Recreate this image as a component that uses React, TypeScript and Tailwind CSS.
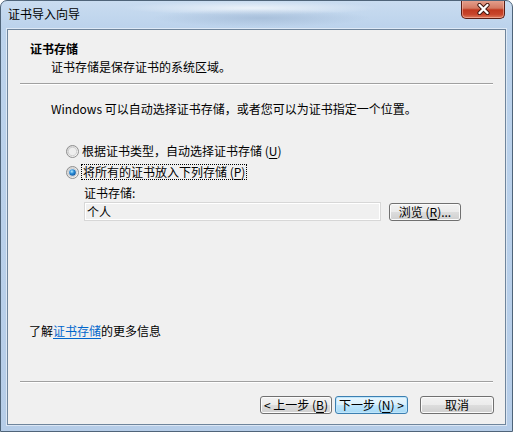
import React from "react";

const font = { fontFamily: '"Noto Sans CJK SC", "Noto Sans", sans-serif' };

function Radio({ checked }: { checked?: boolean }) {
  return (
    <svg width="13" height="13" viewBox="0 0 13 13" className="shrink-0">
      <defs>
        <linearGradient id={checked ? "rgc" : "rgu"} x1="0" y1="0" x2="1" y2="1">
          <stop offset="0" stopColor="#cfcfcf" />
          <stop offset="1" stopColor="#ffffff" />
        </linearGradient>
        <radialGradient id="dot" cx="0.4" cy="0.35" r="0.7">
          <stop offset="0" stopColor="#b9ecff" />
          <stop offset="0.45" stopColor="#2c8fd9" />
          <stop offset="1" stopColor="#0b4f98" />
        </radialGradient>
      </defs>
      <circle cx="6.5" cy="6.5" r="6" fill={`url(#${checked ? "rgc" : "rgu"})`} stroke="#8f8f8f" strokeWidth="1" />
      <circle cx="6.5" cy="6.5" r="4.2" fill="#eeeeee" stroke="#c8c8c8" strokeWidth="0.8" />
      {checked && <circle cx="6.5" cy="6.5" r="3.3" fill="url(#dot)" />}
    </svg>
  );
}

function U({ children }: { children: React.ReactNode }) {
  return <span className="underline underline-offset-2">{children}</span>;
}

function Btn({
  children,
  def,
  className = "",
}: {
  children: React.ReactNode;
  def?: boolean;
  className?: string;
}) {
  return (
    <div
      className={`flex items-center justify-center rounded-[3px] border text-[12px] leading-none text-black ${
        def
          ? "border-[#3c7fb1] bg-[linear-gradient(#eaf6fd_0%,#d9f0fc_50%,#bee6fd_51%,#a7d9f5_100%)] shadow-[inset_0_0_0_1px_#bfe6fb]"
          : "border-[#707070] bg-[linear-gradient(#f2f2f2_0%,#ebebeb_50%,#dddddd_51%,#cfcfcf_100%)] shadow-[inset_0_0_0_1px_#fbfbfb]"
      } ${className}`}
    >
      {children}
    </div>
  );
}

export default function App() {
  return (
    <div className="w-[513px] h-[432px] bg-white" style={font}>
      <div className="relative w-[513px] h-[432px] rounded-t-[7px] border border-[#4f6479] bg-[linear-gradient(180deg,#c9dcf0_0%,#bcd3ec_6%,#b6cde8_100%)] overflow-hidden">
        {/* glass streaks */}
        <div className="pointer-events-none absolute left-[120px] top-[0px] h-[14px] w-[260px] rounded-full bg-[radial-gradient(ellipse_at_center,rgba(255,255,255,0.65),rgba(255,255,255,0)_70%)]" />
        <div className="pointer-events-none absolute left-[150px] top-[8px] h-[18px] w-[220px] rounded-full bg-[radial-gradient(ellipse_at_center,rgba(150,175,205,0.55),rgba(255,255,255,0)_70%)]" />
        {/* title bar */}
        <div className="relative flex h-[28px] items-start">
          <div className="pl-[7px] pt-[5px] text-[12px] leading-[16px] text-black">证书导入向导</div>
          <div className="absolute right-[7px] top-[-1px] flex h-[19px] w-[44px] items-center justify-center rounded-b-[5px] border border-t-0 border-[#5a1d14] bg-[linear-gradient(180deg,#e6a391_0%,#d47a63_45%,#c0381f_55%,#c8452b_80%,#dd7a5c_100%)] shadow-[inset_0_0_0_1px_rgba(255,200,185,0.5)]">
            <svg width="15" height="12" viewBox="0 0 15 12">
              <path d="M3.5 2 L11.5 10 M11.5 2 L3.5 10" stroke="#3e140d" strokeWidth="4.2" strokeLinecap="round" />
              <path d="M3.5 2 L11.5 10 M11.5 2 L3.5 10" stroke="#ffffff" strokeWidth="2.4" strokeLinecap="round" />
            </svg>
          </div>
        </div>
        {/* client area */}
        <div className="mx-[6px] h-[396px] border border-[#6f859c] shadow-[0_0_0_1px_rgba(255,255,255,0.5)] bg-[#f0f0f0] text-[12px] leading-[16px] text-black flex flex-col">
          <div className="pt-[11px] pl-[22px] font-bold">证书存储</div>
          <div className="mt-[2px] pl-[43px]">证书存储是保存证书的系统区域。</div>
          <div className="mt-[8px] mx-[12px] h-[2px] border-t border-b border-t-[#a0a0a0] border-b-white" />
          <div className="mt-[16px] pl-[43px]">Windows 可以自动选择证书存储，或者您可以为证书指定一个位置。</div>
          <div className="mt-[26px] pl-[58px] flex items-center gap-[3px]">
            <Radio />
            <span>
              根据证书类型，自动选择证书存储 (<U>U</U>)
            </span>
          </div>
          <div className="mt-[5px] pl-[58px] flex items-center gap-[2px]">
            <Radio checked />
            <span className="border border-dotted border-black px-[1px] leading-[14px]">
              将所有的证书放入下列存储 (<U>P</U>)
            </span>
          </div>
          <div className="mt-[5px] pl-[76px]">证书存储:</div>
          <div className="mt-[1px] pl-[76px] flex items-start gap-[8px]">
            <div className="h-[19px] w-[297px] border border-[#d7d7d7] bg-[#f0f0f0] pl-[2px] leading-[17px] shadow-[inset_0_0_0_1px_#ffffff]">
              个人
            </div>
            <Btn className="mt-[1px] h-[18px] w-[72px]">
              浏览 (<U>R</U>)...
            </Btn>
          </div>
          <div className="mt-[102px] pl-[21px]">
            了解<span className="text-[#0066cc] underline underline-offset-2">证书存储</span>的更多信息
          </div>
          <div className="mt-[42px] mx-[12px] h-[2px] border-t border-b border-t-[#a0a0a0] border-b-white" />
          <div className="mt-[13px] flex justify-end pr-[11px]">
            <Btn className="h-[18px] w-[72px]">
              &lt; 上一步 (<U>B</U>)
            </Btn>
            <Btn def className="ml-[3px] h-[18px] w-[73px]">
              下一步 (<U>N</U>) &gt;
            </Btn>
            <Btn className="ml-[12px] h-[18px] w-[74px]">取消</Btn>
          </div>
        </div>
      </div>
    </div>
  );
}
